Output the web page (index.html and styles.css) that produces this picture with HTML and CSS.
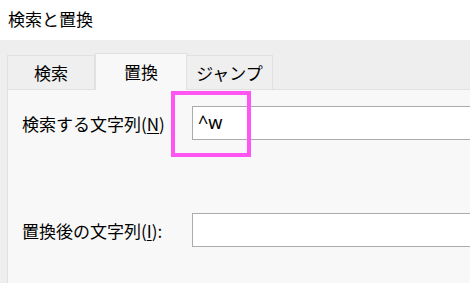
FILE: index.html
```html
<!doctype html>
<html lang="ja">
<head>
  <meta charset="utf-8">
  <title>検索と置換</title>
  <link rel="stylesheet" href="styles.css">
</head>
<body>

<div class="titlebar">検索と置換</div>

<div class="dialog">
  <div class="tabs">
    <div class="tab">検索</div>
    <div class="tab active">置換</div>
    <div class="tab">ジャンプ</div>
  </div>

  <div class="panel">
    <div class="row">
      <label class="label">検索する文字列(<u>N</u>)</label>
      <div class="field">
        <div class="input">^w</div>
        <div class="highlight"></div>
      </div>
    </div>
    <div class="row second">
      <label class="label">置換後の文字列(<u>I</u>):</label>
      <div class="field">
        <div class="input"></div>
      </div>
    </div>
  </div>
</div>

</body>
</html>
```

FILE: styles.css
```css
html, body {
  height: 100%;
}

body {
  margin: 0;
  padding: 0;
  background: #ffffff;
  color: #000000;
  font-family: "Noto Sans CJK JP", "Noto Sans", sans-serif;
  overflow: hidden;
  display: flex;
  flex-direction: column;
}

.titlebar {
  flex: none;
  height: 40px;
  padding-left: 8px;
  font-size: 17px;
  line-height: 37px;
}

.dialog {
  flex: 1;
  display: flex;
  flex-direction: column;
  background: #eeeeee;
  padding: 13px 0 0 7px;
  min-height: 0;
}

.tabs {
  flex: none;
  display: flex;
  align-items: flex-end;
  height: 36px;
}

.tab {
  box-sizing: border-box;
  height: 34px;
  width: 88px;
  border: 1px solid #e1e1e1;
  border-bottom: none;
  background: #efefef;
  font-size: 17px;
  line-height: 34px;
  text-align: center;
}

.tab + .tab {
  border-left: none;
}

.tab.active {
  width: 92px;
  height: 37px;
  margin-bottom: -1px;
  background: #f8f8f8;
  border-left: 1px solid #e1e1e1;
  line-height: 36px;
  position: relative;
  z-index: 1;
}

.tab.active + .tab {
  width: 86px;
}

.panel {
  flex: 1;
  min-height: 0;
  overflow: hidden;
  border: 1px solid #e1e1e1;
  border-right: none;
  border-bottom: none;
  background: #f8f8f8;
  padding: 16px 0 0 14px;
}

.row {
  display: flex;
  align-items: center;
}

.row.second {
  margin-top: 73px;
}

.label {
  flex: none;
  width: 170px;
  font-size: 17px;
}

.label u {
  text-underline-offset: 2px;
}

.field {
  flex: none;
  position: relative;
}

.input {
  box-sizing: border-box;
  width: 290px;
  height: 34px;
  border: 1px solid #ababab;
  background: #ffffff;
  padding-left: 5px;
  font-family: "Noto Sans", sans-serif;
  font-size: 18px;
  line-height: 30px;
}

.highlight {
  position: absolute;
  left: -21px;
  top: -15px;
  width: 80px;
  height: 66px;
  box-sizing: border-box;
  border: 4px solid #ff55f5;
}
```
